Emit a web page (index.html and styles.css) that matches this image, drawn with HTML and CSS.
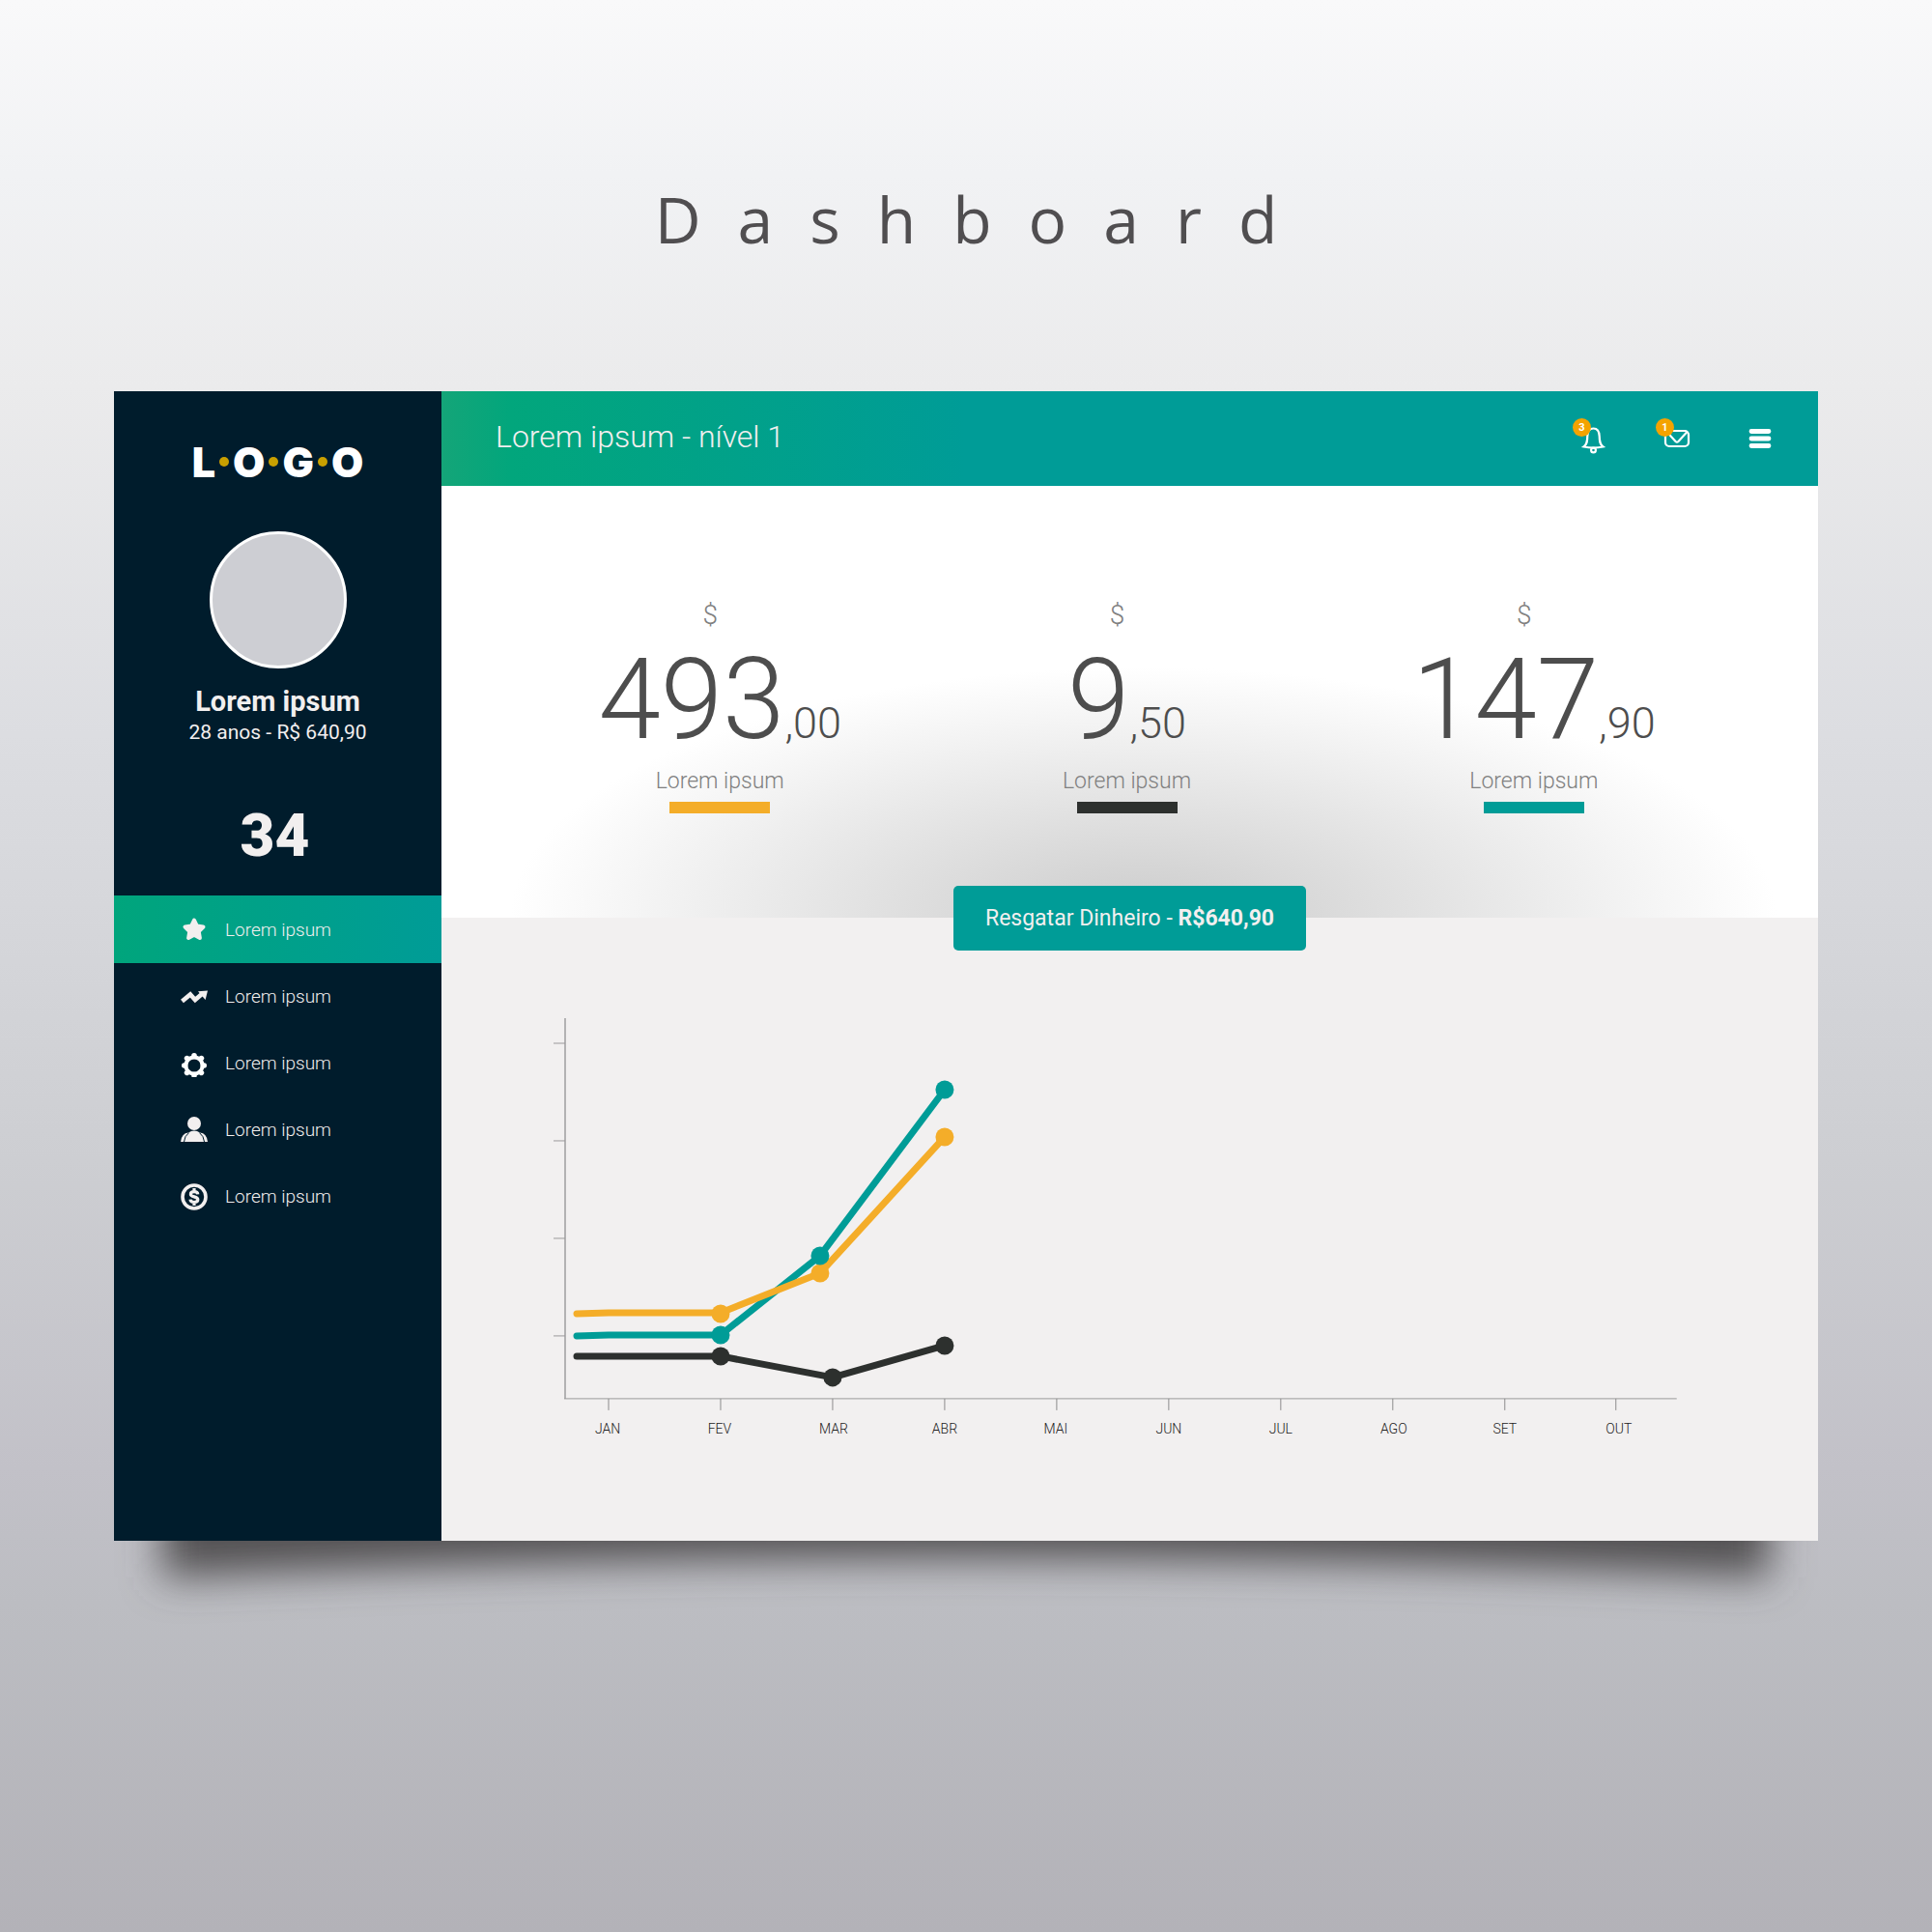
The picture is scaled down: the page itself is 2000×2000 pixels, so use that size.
FILE: index.html
```html
<!DOCTYPE html>
<html lang="pt-BR">
<head>
<meta charset="utf-8">
<meta name="viewport" content="width=device-width, initial-scale=1">
<title>Dashboard</title>
<link rel="stylesheet" href="styles.css">
</head>
<body>
<h1 class="page-title">Dashboard</h1>
<div class="stage">
  <svg class="shadow" viewBox="0 0 1764 160" preserveAspectRatio="none" aria-hidden="true">
    <defs>
      <filter id="soft" x="-10%" y="-50%" width="120%" height="220%"><feGaussianBlur stdDeviation="21"/></filter>
    </defs>
    <path d="M50 0H1714V98Q882 58 50 98Z" fill="#525153" filter="url(#soft)"/>
  </svg>
  <div class="panel">
    <aside class="sidebar">
      <div class="logo">L<i class="dot"></i>O<i class="dot"></i>G<i class="dot"></i>O</div>
      <div class="avatar"></div>
      <p class="name">Lorem ipsum</p>
      <p class="meta">28 anos - R$ 640,90</p>
      <p class="score">34</p>
      <nav class="menu">
        <a class="item active" href="#">
          <svg class="icon" viewBox="0 0 28 28"><path d="M14 4.500L16.900 10.600L23.500 11.500L18.700 16.200L19.900 23L14 19.800L8.100 23L9.300 16.200L4.500 11.500L11.100 10.600Z" fill="#f2efef" stroke="#f2efef" stroke-width="4" stroke-linejoin="round"/></svg>
          Lorem ipsum</a>
        <a class="item" href="#">
          <svg class="icon" viewBox="0 0 28 28"><path d="M1.500 18.500L10 11.500L15 17L22 11" fill="none" stroke="#f2efef" stroke-width="4.600"/><path d="M18 8.200L28 7.500L25.600 17Z" fill="#f2efef"/></svg>
          Lorem ipsum</a>
        <a class="item" href="#">
          <svg class="icon" viewBox="0 -2 28 28"><circle cx="14" cy="14" r="8.600" fill="none" stroke="#fff" stroke-width="4"/><g stroke="#fff" stroke-width="5.600" stroke-linecap="round"><path d="M14 3.800V4.500M14 24.200V23.500M3.800 14H4.500M24.200 14H23.500M6.600 6.600L7.300 7.300M21.400 6.600L20.700 7.300M6.600 21.400L7.300 20.700M21.400 21.400L20.700 20.700"/></g></svg>
          Lorem ipsum</a>
        <a class="item" href="#">
          <svg class="icon" viewBox="0 0 28 28"><circle cx="14" cy="7" r="7" fill="#f2efef"/><path d="M0 26Q1 17 8 16.500Q11 14.500 14 14.500T20 16.500Q27 17 28 26Z" fill="#f2efef"/><path d="M3.500 26Q4 20 8.500 16.600M24.500 26Q24 20 19.500 16.600" fill="none" stroke="#001c2c"/></svg>
          Lorem ipsum</a>
        <a class="item" href="#">
          <svg class="icon" viewBox="0 0 28 28"><circle cx="14" cy="14" r="12" fill="none" stroke="#f2efef" stroke-width="3.600"/><path d="M17.800 11.300C17.600 9.300 16 8.600 14 8.600C11.800 8.600 10.400 9.600 10.400 11.200C10.400 14.800 17.800 13 17.800 16.800C17.800 18.500 16.200 19.500 14 19.500C11.800 19.500 10.200 18.600 10 16.600M14 5V9M14 19V23" fill="none" stroke="#f2efef" stroke-width="3.200"/></svg>
          Lorem ipsum</a>
      </nav>
    </aside>
    <main class="content">
      <header class="topbar">
        <h2 class="heading">Lorem ipsum - nível 1</h2>
        <div class="tools">
          <button class="tool" type="button" aria-label="Notificações">
            <svg class="glyph" viewBox="0 0 28 28"><path d="M3.500 20.500C7 18 7.200 14.500 7.300 9.500C7.500 4 9.500 1.500 13.500 1.500S19.500 4 19.700 9.500C19.800 14.500 20 18 23.500 20.500Q13.500 22.500 3.500 20.500Z" fill="none" stroke="#fff" stroke-width="2.200"/><circle cx="13.500" cy="24" r="2.400" fill="none" stroke="#fff" stroke-width="2.200"/></svg>
            <span class="badge">3</span>
          </button>
          <button class="tool" type="button" aria-label="Mensagens">
            <svg class="glyph" viewBox="0 0 28 28"><rect x="2" y="4" width="24" height="16" rx="4" fill="none" stroke="#fff" stroke-width="2.200"/><path d="M4 5.500L12.500 15Q14 16.200 15.500 15L24.500 5" fill="none" stroke="#fff" stroke-width="2.200"/></svg>
            <span class="badge">1</span>
          </button>
          <button class="tool" type="button" aria-label="Menu">
            <svg class="glyph" viewBox="0 0 28 28"><path d="M5 4.500H23M5 12H23M5 19.500H23" stroke="#fff" stroke-width="4.800" stroke-linecap="round"/></svg>
          </button>
        </div>
      </header>
      <section class="stats">
        <div class="stat"><span class="currency">$</span><span class="value">493<small class="cents">,00</small></span><span class="label">Lorem ipsum</span><span class="bar orange"></span></div>
        <div class="stat"><span class="currency">$</span><span class="value">9<small class="cents">,50</small></span><span class="label">Lorem ipsum</span><span class="bar dark"></span></div>
        <div class="stat"><span class="currency">$</span><span class="value">147<small class="cents">,90</small></span><span class="label">Lorem ipsum</span><span class="bar teal"></span></div>
      </section>
      <section class="report">
        <button class="redeem" type="button">Resgatar Dinheiro - <b>R$640,90</b></button>
        <svg class="chart" viewBox="0 0 1183 450" role="img" aria-label="Evolução mensal">
          <path d="M14 14V408" stroke="#b3b2b3" stroke-width="2"/>
          <path d="M13 408H1165M2 40H14M2 141H14M2 242H14M2 343H14" fill="none" stroke="#9b9a9b"/>
          <path d="M59 408V420M175 408V420M291 408V420M407 408V420M523 408V420M639 408V420M755 408V420M871 408V420M987 408V420M1102 408V420" stroke="#8c8b8c"/>
          <g class="series">
            <path d="M26 343L59 342H175L278 260L407 88" stroke="#009c97"/>
            <path d="M26 320L59 319H175L278 278L407 137" stroke="#f4ad29"/>
            <path d="M26 364H175L291 386L407 353" stroke="#2d302e"/>
          </g>
          <g fill="#f4ad29"><circle cx="175" cy="320" r="9.500"/><circle cx="278" cy="278" r="9.500"/><circle cx="407" cy="137" r="9.500"/></g>
          <g fill="#009c97"><circle cx="175" cy="342" r="9.500"/><circle cx="278" cy="260" r="9.500"/><circle cx="407" cy="88" r="9.500"/></g>
          <g fill="#2d302e"><circle cx="175" cy="364" r="9.500"/><circle cx="291" cy="386" r="9.500"/><circle cx="407" cy="353" r="9.500"/></g>
          <g class="months">
            <text x="58" y="444">JAN</text><text x="174" y="444">FEV</text><text x="292" y="444">MAR</text><text x="407" y="444">ABR</text><text x="522" y="444">MAI</text><text x="639" y="444">JUN</text><text x="755" y="444">JUL</text><text x="872" y="444">AGO</text><text x="987" y="444">SET</text><text x="1105" y="444">OUT</text>
          </g>
        </svg>
      </section>
    </main>
  </div>
</div>
</body>
</html>
```
FILE: styles.css
```css
* { box-sizing: border-box; }
html { min-height: 100%; background: linear-gradient(#f9f9fa 0%, #f1f2f4 9%, #ebebec 20%, #dcdde1 38%, #cdced2 60%, #c2c1c8 76%, #bcbdc2 83%, #b3b2b8 100%); }
body { margin: 0; font-family: Roboto, sans-serif; color: #4d4d4d; }
p, h1, h2 { margin: 0; }

.page-title { padding: 181px 0 0 38px; font: 400 66px/90px "Open Sans", sans-serif; letter-spacing: 38px; text-align: center; color: #504e50; }

.stage { position: relative; margin: 134px 118px 0; padding-bottom: 100px; }
.shadow { position: absolute; left: 0; bottom: 0; width: 100%; height: 160px; overflow: visible; }
.panel { position: relative; display: grid; grid-template-columns: 339px 1fr; min-height: 1190px; }

.sidebar { display: flex; flex-direction: column; align-items: center; background: #001c2c; color: #f2efef; }
.logo { display: flex; align-items: center; gap: 4px; margin-top: 49px; font: 900 43px/48px Inter, sans-serif; color: #fff; }
.dot { width: 10px; height: 10px; border-radius: 50%; background: #c9a000; }
.avatar { width: 142px; height: 142px; margin-top: 48px; border: 3px solid #fff; border-radius: 50%; background: #cdced3; }
.name { margin-top: 16px; font-size: 29px; font-weight: 700; line-height: 36px; }
.meta { font-size: 21px; line-height: 28px; }
.score { margin-top: 55px; padding-right: 6px; font-size: 62px; font-weight: 900; line-height: 76px; }
.menu { align-self: stretch; margin-top: 24px; }
.item { display: flex; align-items: center; gap: 18px; height: 69px; padding-left: 69px; font-size: 19px; font-weight: 300; color: #f2efef; text-decoration: none; }
.active { height: 70px; background: linear-gradient(90deg, #00a57c, #009c97); }
.icon { width: 28px; height: 28px; }

.content { display: flex; flex-direction: column; min-width: 0; }
.topbar { display: flex; align-items: center; justify-content: space-between; height: 98px; padding: 0 46px 0 56px; background: linear-gradient(90deg, #14a578, #02a67c 5%, #009c97 38%); }
.heading { padding-bottom: 4px; font-size: 32px; font-weight: 300; color: #f2efef; }
.tools { display: flex; gap: 58px; padding-top: 4px; }
.tool { position: relative; display: flex; width: 28px; height: 28px; padding: 0; border: 0; background: none; }
.glyph { width: 28px; height: 28px; }
.badge { position: absolute; left: -8px; top: -9px; width: 19px; height: 19px; border-radius: 50%; background: #f4a300; color: #fff; font: 700 11px/19px Roboto, sans-serif; text-align: center; }

.stats { display: flex; justify-content: center; gap: 229px; height: 447px; padding: 117px 6px 0 0; background: radial-gradient(46% 58% at 51% 100%, #cbcbcb, #fff) #fff; }
.stat { display: flex; flex-direction: column; align-items: center; }
.currency { padding-right: 20px; font-size: 28px; font-weight: 300; line-height: 34px; color: #808080; }
.value { font-size: 116px; font-weight: 300; line-height: 140px; }
.cents { font-size: 45px; line-height: 45px; }
.label { font-size: 23px; font-weight: 300; line-height: 30px; color: #808080; }
.bar { width: 104px; height: 12px; margin-top: 6px; }
.orange { background: #f4ad29; }
.dark { background: #2d302e; }
.teal { background: #009c97; }

.report { display: flex; flex: 1; flex-direction: column; align-items: center; background: #f2f0f0; }
.redeem { height: 67px; margin-top: -33px; padding: 0 33px; border: 0; border-radius: 5px; background: #009c97; color: #f2efef; font: 400 23px/28px Roboto, sans-serif; }
.chart { align-self: flex-start; width: 83%; margin: 56px 0 0 8%; }
.series path { fill: none; stroke-width: 7; stroke-linecap: round; stroke-linejoin: round; }
.months text { font: 300 14px Roboto, sans-serif; text-anchor: middle; fill: #222; }
```
